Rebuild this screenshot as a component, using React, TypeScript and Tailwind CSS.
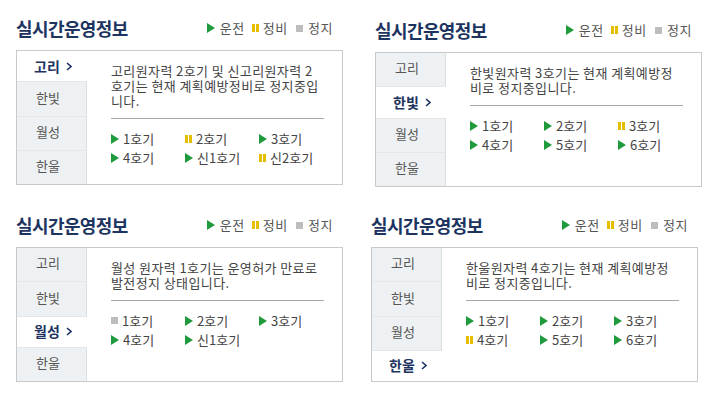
type Status = "run" | "fix" | "stop";

const plants = ["고리", "한빛", "월성", "한울"];

const panels: {
  active: number;
  lines: string[];
  units: { name: string; status: Status }[];
  className: string;
}[] = [
  {
    active: 0,
    lines: ["고리원자력 2호기 및 신고리원자력 2", "호기는 현재 계획예방정비로 정지중입", "니다."],
    units: [
      { name: "1호기", status: "run" },
      { name: "2호기", status: "fix" },
      { name: "3호기", status: "run" },
      { name: "4호기", status: "run" },
      { name: "신1호기", status: "run" },
      { name: "신2호기", status: "fix" },
    ],
    className: "ml-[16px]",
  },
  {
    active: 1,
    lines: ["한빛원자력 3호기는 현재 계획예방정", "비로 정지중입니다."],
    units: [
      { name: "1호기", status: "run" },
      { name: "2호기", status: "run" },
      { name: "3호기", status: "fix" },
      { name: "4호기", status: "run" },
      { name: "5호기", status: "run" },
      { name: "6호기", status: "run" },
    ],
    className: "ml-[32px] mt-[2px]",
  },
  {
    active: 2,
    lines: ["월성 원자력 1호기는 운영허가 만료로", "발전정지 상태입니다."],
    units: [
      { name: "1호기", status: "stop" },
      { name: "2호기", status: "run" },
      { name: "3호기", status: "run" },
      { name: "4호기", status: "run" },
      { name: "신1호기", status: "run" },
    ],
    className: "ml-[16px]",
  },
  {
    active: 3,
    lines: ["한울원자력 4호기는 현재 계획예방정", "비로 정지중입니다."],
    units: [
      { name: "1호기", status: "run" },
      { name: "2호기", status: "run" },
      { name: "3호기", status: "run" },
      { name: "4호기", status: "fix" },
      { name: "5호기", status: "run" },
      { name: "6호기", status: "run" },
    ],
    className: "ml-[28px]",
  },
];

function StatusIcon({ status }: { status: Status }) {
  if (status === "run")
    return (
      <svg width="8" height="10" viewBox="0 0 8 10" className="shrink-0">
        <polygon points="0,0 8,5 0,10" fill="#1f9a3c" />
      </svg>
    );
  if (status === "fix")
    return (
      <span className="flex gap-[1px] shrink-0">
        <span className="w-[3px] h-[8px] bg-[#e6be00]" />
        <span className="w-[3px] h-[8px] bg-[#e6be00]" />
      </span>
    );
  return <span className="block w-[7px] h-[7px] bg-[#bdbdbd] shrink-0" />;
}

function Legend() {
  return (
    <div className="flex items-center text-[13px] text-[#555] tracking-[0.6px] pr-[10px]">
      <StatusIcon status="run" />
      <span className="ml-[5px]">운전</span>
      <span className="ml-[7px]">
        <StatusIcon status="fix" />
      </span>
      <span className="ml-[4px]">정비</span>
      <span className="ml-[8px]">
        <StatusIcon status="stop" />
      </span>
      <span className="ml-[5px]">정지</span>
    </div>
  );
}

function Panel({ data }: { data: (typeof panels)[number] }) {
  return (
    <div className={"w-[327px] shrink-0 " + data.className}>
      <div className="flex items-center justify-between h-[32px] mb-[6px]">
        <h2 className="text-[18px] font-bold tracking-[-0.6px] text-[#1d3461]">실시간운영정보</h2>
        <Legend />
      </div>
      <div className="flex h-[135px] border border-[#c9c9c9] bg-white">
        <div className="w-[70px] shrink-0 flex flex-col">
          {plants.map((p, i) =>
            i === data.active ? (
              <div
                key={p}
                className="flex-1 flex items-center pl-[17px] bg-white text-[14px] font-bold text-[#1d3461] border-b border-[#e3e6e8] last:border-b-0"
              >
                {p}
                <svg width="6" height="9" viewBox="0 0 6 9" className="ml-[6px]">
                  <polyline points="1,1 5,4.5 1,8" fill="none" stroke="#1d3461" strokeWidth="1.6" />
                </svg>
              </div>
            ) : (
              <div
                key={p}
                className="flex-1 flex items-center pl-[19px] pb-[3px] bg-[#eef1f3] text-[13px] text-[#555] border-r border-b border-r-[#d9dee1] border-b-[#e3e7ea] last:border-b-0"
              >
                {p}
              </div>
            )
          )}
        </div>
        <div className="flex-1 min-w-0 pl-[24px] pr-[18px] pt-[12px]">
          <div className="text-[13px] leading-[15px] text-[#444] tracking-[0.4px]">
            {data.lines.map((l) => (
              <div key={l} className="whitespace-nowrap">
                {l}
              </div>
            ))}
          </div>
          <div className="h-px bg-[#a8a8a8] mt-[10px]" />
          <div className="grid grid-cols-[74px_74px_74px] mt-[10px]">
            {data.units.map((u) => (
              <div key={u.name} className="flex items-center h-[19px] text-[13px] text-[#444]">
                <StatusIcon status={u.status} />
                <span className="ml-[4px]">{u.name}</span>
              </div>
            ))}
          </div>
        </div>
      </div>
    </div>
  );
}

export default function App() {
  return (
    <div
      className="w-[720px] h-[403px] bg-white pt-[12px] overflow-hidden"
      style={{ fontFamily: '"Noto Sans CJK KR", "Noto Sans", sans-serif' }}
    >
      <div className="flex items-start">
        <Panel data={panels[0]} />
        <Panel data={panels[1]} />
      </div>
      <div className="flex items-start mt-[22px]">
        <Panel data={panels[2]} />
        <Panel data={panels[3]} />
      </div>
    </div>
  );
}
